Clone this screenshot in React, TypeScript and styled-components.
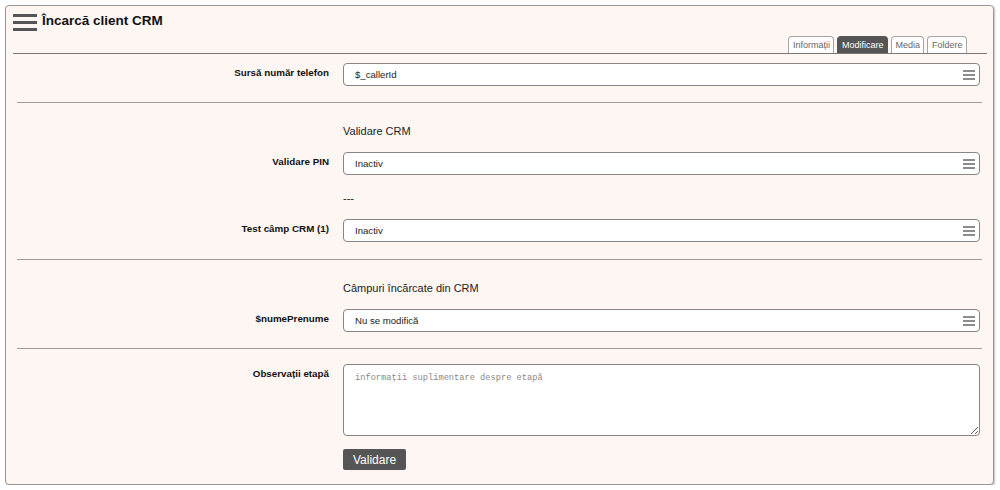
import React from "react";
import styled, { createGlobalStyle } from "styled-components";

const Global = createGlobalStyle`
  html, body { margin: 0; padding: 0; background: #ffffff; }
  body { font-family: "Liberation Sans", Arial, sans-serif; }
  * { box-sizing: border-box; }
`;

const Panel = styled.div`
  margin: 5px 6px 0 5px;
  height: 480px;
  border: 1px solid #9a9492;
  border-radius: 4px;
  background: #fdf6f3;
  box-shadow: 1px 1px 2px rgba(0,0,0,0.25);
  padding: 6px 6px 0 7px;
`;

const TitleBar = styled.div`
  display: flex;
  align-items: flex-start;
  gap: 3px;
  height: 24px;
`;

const Title = styled.h1`
  margin: 1px 0 0 0;
  font-size: 13.5px;
  font-weight: bold;
  color: #111;
  line-height: 16px;
`;

const TabsBar = styled.div`
  display: flex;
  justify-content: flex-end;
  gap: 3px;
  padding-right: 20px;
  border-bottom: 1px solid #7c7674;
`;

const Tab = styled.div<{ $active?: boolean }>`
  height: 17px;
  padding: 0 3.5px;
  font-size: 9px;
  line-height: 16px;
  border: 1px solid ${(p) => (p.$active ? "#555" : "#a8a4a2")};
  border-bottom: none;
  border-radius: 4px 4px 0 0;
  background: ${(p) => (p.$active ? "#555" : "#fff")};
  color: ${(p) => (p.$active ? "#fff" : "#666")};
`;

const Form = styled.div`
  padding: 0 5px 0 4px;
`;

const Row = styled.div<{ $top?: number }>`
  display: grid;
  grid-template-columns: 312px 1fr;
  column-gap: 14px;
  align-items: start;
  margin-top: ${(p) => p.$top ?? 0}px;
  padding-right: 2px;
`;

const Label = styled.div`
  text-align: right;
  font-size: 9.8px;
  font-weight: bold;
  color: #111;
  padding-top: 3px;
  line-height: 14px;
`;

const Note = styled.div<{ $top: number }>`
  margin-top: ${(p) => p.$top}px;
  margin-left: 326px;
  font-size: 11px;
  line-height: 16px;
  color: #222;
`;

const Select = styled.div`
  height: 23px;
  border: 1px solid #8a8482;
  border-radius: 4px;
  background: #fff;
  display: flex;
  align-items: center;
  justify-content: space-between;
  padding: 0 4px 0 11px;
  font-size: 9.6px;
  color: #222;
`;

const Lines = styled.span`
  display: flex;
  flex-direction: column;
  gap: 2px;
  width: 12px;
  & > i {
    display: block;
    height: 2px;
    background: #8c8c8c;
  }
`;

const Separator = styled.hr<{ $top: number }>`
  margin: ${(p) => p.$top}px 0 0 0;
  border: none;
  border-top: 1px solid #a09a98;
  height: 0;
`;

const TextArea = styled.textarea`
  height: 72px;
  border: 1px solid #8a8482;
  border-radius: 4px;
  background: #fff;
  padding: 8px 11px;
  font-family: "Liberation Mono", "DejaVu Sans Mono", monospace;
  font-size: 8.7px;
  resize: vertical;
  &::placeholder { color: #8a8a8a; }
`;

const Button = styled.button`
  margin: 13px 0 0 326px;
  height: 21px;
  padding: 0 10px;
  border: none;
  border-radius: 2px;
  background: #555;
  color: #fff;
  font-family: "Liberation Sans", Arial, sans-serif;
  font-size: 12px;
`;

const MenuIcon = () => (
  <svg width="26" height="20" viewBox="0 0 26 20" style={{ marginTop: 1 }}>
    <rect x="0" y="1" width="24" height="3" fill="#555" />
    <rect x="0" y="8" width="24" height="3" fill="#555" />
    <rect x="0" y="15" width="24" height="3" fill="#555" />
  </svg>
);

const SelectBox = ({ value }: { value: string }) => (
  <Select>
    <span>{value}</span>
    <Lines>
      <i />
      <i />
      <i />
    </Lines>
  </Select>
);

export default function App() {
  return (
    <>
      <Global />
      <Panel>
        <TitleBar>
          <MenuIcon />
          <Title>Încarcă client CRM</Title>
        </TitleBar>
        <TabsBar>
          <Tab>Informații</Tab>
          <Tab $active>Modificare</Tab>
          <Tab>Media</Tab>
          <Tab>Foldere</Tab>
        </TabsBar>
        <Form>
          <Row $top={9}>
            <Label>Sursă număr telefon</Label>
            <SelectBox value="$_callerId" />
          </Row>
          <Separator $top={16} />
          <Note $top={20}>Validare CRM</Note>
          <Row $top={13}>
            <Label>Validare PIN</Label>
            <SelectBox value="Inactiv" />
          </Row>
          <Note $top={15}>---</Note>
          <Row $top={13}>
            <Label>Test câmp CRM (1)</Label>
            <SelectBox value="Inactiv" />
          </Row>
          <Separator $top={17} />
          <Note $top={20}>Câmpuri încărcate din CRM</Note>
          <Row $top={13}>
            <Label>$numePrenume</Label>
            <SelectBox value="Nu se modifică" />
          </Row>
          <Separator $top={16} />
          <Row $top={15}>
            <Label>Observații etapă</Label>
            <TextArea placeholder="informații suplimentare despre etapă" />
          </Row>
          <Button>Validare</Button>
        </Form>
      </Panel>
    </>
  );
}
